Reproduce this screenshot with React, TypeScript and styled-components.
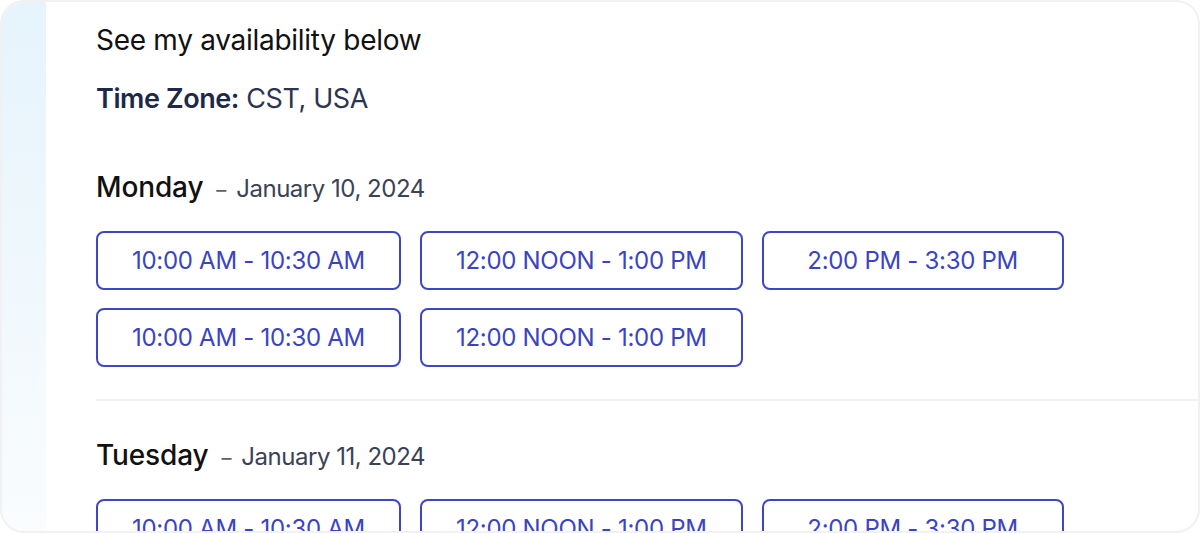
import { FunctionComponent } from "react";
import styled, { createGlobalStyle } from "styled-components";

const GlobalStyle = createGlobalStyle`
  html, body {
    margin: 0;
    padding: 0;
    background: #ffffff;
  }
  body {
    font-family: Inter, "Noto Sans", sans-serif;
  }
`;

type Day = {
  name: string;
  date: string;
  slots: string[];
};

const days: Day[] = [
  {
    name: "Monday",
    date: "January 10, 2024",
    slots: [
      "10:00 AM - 10:30 AM",
      "12:00 NOON - 1:00 PM",
      "2:00 PM - 3:30 PM",
      "10:00 AM - 10:30 AM",
      "12:00 NOON - 1:00 PM",
    ],
  },
  {
    name: "Tuesday",
    date: "January 11, 2024",
    slots: ["10:00 AM - 10:30 AM", "12:00 NOON - 1:00 PM", "2:00 PM - 3:30 PM"],
  },
];

const App: FunctionComponent = () => {
  return (
    <>
      <GlobalStyle />
      <Card>
        <Side />
        <Main>
          <Intro>See my availability below</Intro>
          <TimeZone>
            <strong>Time Zone:</strong> CST, USA
          </TimeZone>
          {days.map((day, i) => (
            <DaySection key={day.name} first={i === 0}>
              <DayTitle>
                {day.name}
                <Dash>–</Dash>
                <DayDate>{day.date}</DayDate>
              </DayTitle>
              <Slots>
                {day.slots.map((slot, j) => (
                  <Slot key={j}>{slot}</Slot>
                ))}
              </Slots>
            </DaySection>
          ))}
        </Main>
      </Card>
    </>
  );
};

const Card = styled.div`
  box-sizing: border-box;
  height: 533px;
  display: flex;
  border: 2px solid #f1f1f3;
  border-radius: 24px;
  overflow: hidden;
  background: #ffffff;
`;

const Side = styled.div`
  flex: 0 0 44px;
  background: linear-gradient(180deg, #e6f4fc 0%, #eef7fc 45%, #fafcfe 100%);
`;

const Main = styled.div`
  flex: 1;
  padding: 20px 0 0 50px;
  min-width: 0;
`;

const Intro = styled.div`
  font-size: 28px;
  line-height: 36px;
  color: #111111;
  letter-spacing: -0.01em;
`;

const TimeZone = styled.div`
  margin-top: 24px;
  font-size: 27px;
  line-height: 34px;
  color: #2c3550;
  letter-spacing: -0.015em;

  strong {
    font-weight: 600;
    color: #1d2949;
  }
`;

const DaySection = styled.section<{ first?: boolean }>`
  padding: ${(p) => (p.first ? "53px" : "36px")} 0 32px;
  border-top: ${(p) => (p.first ? "none" : "2px solid #f2f2f2")};
`;

const DayTitle = styled.h3`
  margin: 0;
  font-size: 28px;
  line-height: 36px;
  font-weight: 500;
  color: #111111;
  letter-spacing: -0.005em;
`;

const Dash = styled.span`
  margin: 0 10px 0 13px;
  font-size: 20px;
  font-weight: 400;
  color: #5a6072;
`;

const DayDate = styled.span`
  font-size: 24px;
  font-weight: 400;
  color: #3a4256;
  letter-spacing: -0.02em;
`;

const Slots = styled.div`
  margin-top: 23px;
  display: flex;
  flex-wrap: wrap;
  gap: 18px 19px;
`;

const Slot = styled.button`
  box-sizing: border-box;
  min-width: 302px;
  height: 59px;
  padding: 0 34px;
  border: 2px solid #3d47c6;
  border-radius: 8px;
  background: #ffffff;
  color: #3a44c2;
  font-family: Inter, "Noto Sans", sans-serif;
  font-size: 24px;
  font-weight: 400;
  letter-spacing: -0.012em;
  cursor: pointer;
`;

export default App;
